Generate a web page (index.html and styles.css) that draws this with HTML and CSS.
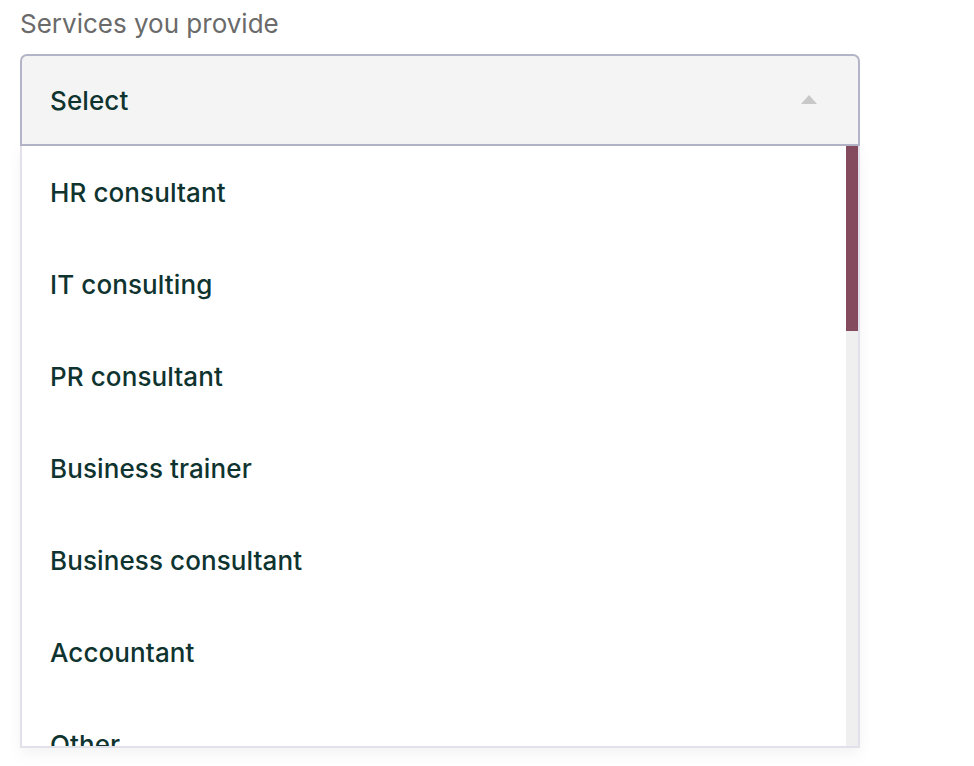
FILE: index.html
```html
<!DOCTYPE html>
<html lang="en">
<head>
<meta charset="utf-8">
<title>Services you provide</title>
<link rel="stylesheet" href="styles.css">
</head>
<body>
<div class="field">
  <div class="label">Services you provide</div>
  <div class="select">
    <span class="select-value">Select</span>
    <svg class="caret" width="16" height="9" viewBox="0 0 16 9"><path d="M8 0 L16 9 L0 9 Z" fill="#c8c8c8"/></svg>
  </div>
  <div class="menu">
    <ul class="options">
      <li class="option">HR consultant</li>
      <li class="option">IT consulting</li>
      <li class="option">PR consultant</li>
      <li class="option">Business trainer</li>
      <li class="option">Business consultant</li>
      <li class="option">Accountant</li>
      <li class="option">Other</li>
    </ul>
    <div class="scrollbar"><div class="thumb"></div></div>
  </div>
</div>
</body>
</html>
```

FILE: styles.css
```css
* { box-sizing: border-box; }
html, body { margin: 0; padding: 0; background: #ffffff; }
body {
  font-family: Inter, "Noto Sans", "Liberation Sans", sans-serif;
  width: 974px;
  height: 766px;
  overflow: hidden;
}
.field {
  padding: 8px 0 0 20px;
  width: 860px;
}
.label {
  font-size: 26px;
  line-height: 32px;
  color: #6a6a6a;
  font-weight: 400;
  margin-bottom: 14px;
}
.select {
  height: 92px;
  background: #f4f4f4;
  border: 2px solid #b4b4c9;
  border-radius: 7px 7px 0 0;
  display: flex;
  align-items: center;
  justify-content: space-between;
  padding: 0 41px 0 28px;
}
.select-value {
  font-size: 26px;
  font-weight: 500;
  letter-spacing: 0.1px;
  color: #0f3430;
}
.caret { display: block; margin-top: -1px; }
.menu {
  display: flex;
  height: 602px;
  border: 2px solid #e2e1ea;
  border-top: none;
  overflow: hidden;
  box-shadow: 0 6px 14px rgba(0, 0, 0, 0.05);
}
.options {
  list-style: none;
  margin: 0;
  padding: 0;
  flex: 1;
}
.option {
  height: 92px;
  display: flex;
  align-items: center;
  padding-left: 28px;
  font-size: 26px;
  font-weight: 500;
  letter-spacing: 0.1px;
  color: #0f3430;
}
.scrollbar {
  width: 12px;
  background: #efefef;
  flex: none;
}
.thumb {
  height: 185px;
  background: #844a5e;
}
```
